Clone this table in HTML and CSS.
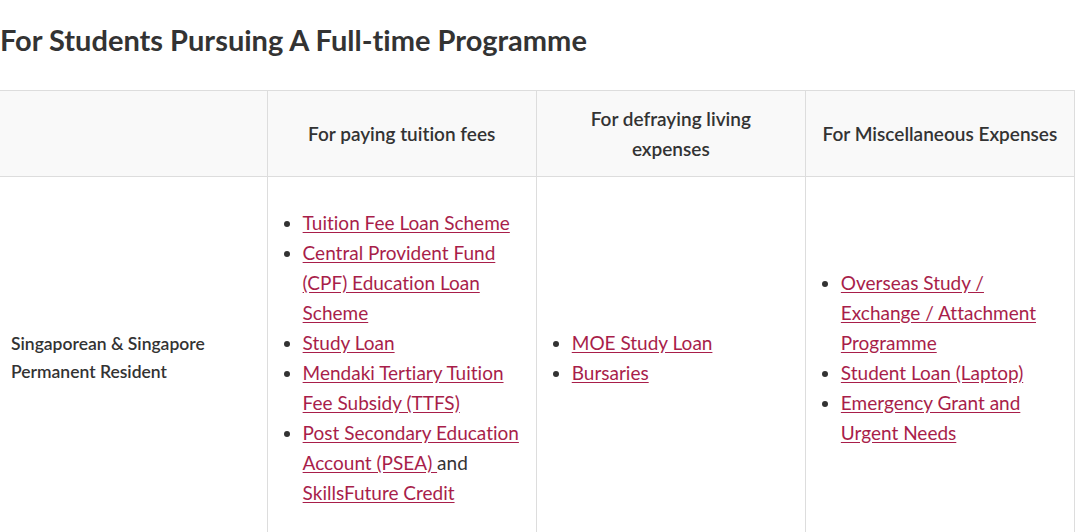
FILE: index.html
```html
<!DOCTYPE html>
<html lang="en">
<head>
<meta charset="utf-8">
<title>For Students Pursuing A Full-time Programme</title>
<link rel="stylesheet" href="styles.css">
</head>
<body>
<h2 class="title">For Students Pursuing A Full-time Programme</h2>
<table class="aid">
  <colgroup>
    <col class="c1"><col class="c2"><col class="c3"><col class="c4">
  </colgroup>
  <thead>
    <tr>
      <th></th>
      <th>For paying tuition fees</th>
      <th>For defraying living expenses</th>
      <th>For Miscellaneous Expenses</th>
    </tr>
  </thead>
  <tbody>
    <tr>
      <td class="who">Singaporean &amp; Singapore Permanent Resident</td>
      <td>
        <ul>
          <li><a href="#">Tuition Fee Loan Scheme</a></li>
          <li><a href="#">Central Provident Fund (CPF) Education Loan Scheme</a></li>
          <li><a href="#">Study Loan</a></li>
          <li><a href="#">Mendaki Tertiary Tuition Fee Subsidy (TTFS)</a></li>
          <li><a href="#">Post Secondary Education Account (PSEA) </a>and <a href="#">SkillsFuture Credit</a></li>
        </ul>
      </td>
      <td>
        <ul>
          <li><a href="#">MOE Study Loan</a></li>
          <li><a href="#">Bursaries</a></li>
        </ul>
      </td>
      <td>
        <ul>
          <li><a href="#">Overseas Study / Exchange / Attachment Programme</a></li>
          <li><a href="#">Student Loan (Laptop)</a></li>
          <li><a href="#">Emergency Grant and Urgent Needs</a></li>
        </ul>
      </td>
    </tr>
  </tbody>
</table>
</body>
</html>
```
FILE: styles.css
```css
html, body {
  margin: 0;
  padding: 0;
  background: #ffffff;
}
body {
  font-family: Lato, "Open Sans", "Liberation Sans", sans-serif;
  color: #333333;
  font-variant-ligatures: none;
}
.title {
  margin: 0;
  padding: 21px 0 0 0;
  height: 68px;
  box-sizing: border-box;
  font-size: 29px;
  font-weight: 700;
  line-height: 38px;
  color: #333333;
}
.aid {
  margin-top: 22px;
  border-collapse: collapse;
  width: 1075px;
  table-layout: fixed;
}
.c1 { width: 267px; }
.c2, .c3, .c4 { width: 269px; }
.aid th, .aid td {
  border: 1px solid #dddddd;
  vertical-align: middle;
}
.aid th:first-child, .aid td:first-child {
  border-left: none;
}
.aid th + th, .aid td + td {
  border-left-color: #cccccc;
}
.aid th {
  background: #f9f9f9;
  height: 85px;
  padding: 0 16px;
  font-size: 19px;
  font-weight: 600;
  line-height: 30px;
  text-align: center;
  color: #333333;
}
.aid td {
  height: 361px;
  padding: 0 10px;
  font-size: 19px;
  line-height: 30px;
}
.aid td.who {
  padding-left: 11px;
  font-size: 17.5px;
  font-weight: 600;
  line-height: 28px;
}
.aid ul {
  margin: 0;
  padding-left: 25px;
}
.aid a {
  color: #a81e4a;
  text-decoration: underline;
  text-underline-offset: 2px;
}
```
